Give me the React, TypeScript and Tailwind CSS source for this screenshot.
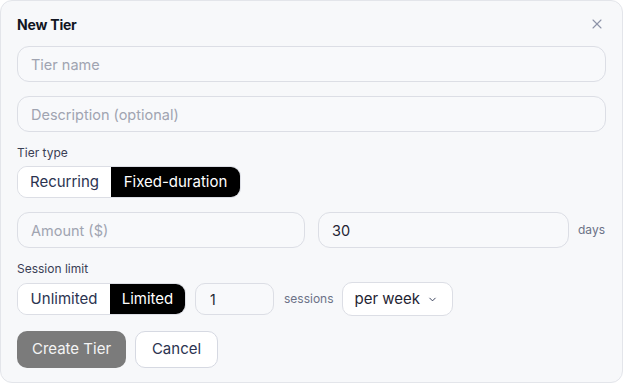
import { ChevronDown, X } from "lucide-react";

const inputClass =
  "h-9 rounded-xl border border-[#dcdee5] bg-[#f8f9fb] px-[13px] text-[14.5px] text-[#1f2433] placeholder:text-[#a0a4b1] outline-none";

const App = () => {
  return (
    <div className="w-[624px] h-[384px] bg-white" style={{ fontFamily: "Inter, 'Noto Sans', sans-serif" }}>
      <div className="w-[623px] h-[383px] rounded-[12px] border border-[#e3e5ea] bg-[#f7f8fa] px-4 pt-[13px] flex flex-col">
        {/* header */}
        <div className="flex items-center justify-between h-5">
          <h2 className="text-[14px] font-bold text-[#111522] tracking-[-0.2px]">New Tier</h2>
          <X className="w-4 h-4 mr-[1px] text-[#8d93a8]" strokeWidth={1.6} />
        </div>

        <input className={`${inputClass} mt-3 w-full`} placeholder="Tier name" />
        <input className={`${inputClass} mt-[14px] w-full`} placeholder="Description (optional)" />

        <label className="mt-[13px] h-4 text-[12px] leading-4 text-[#3a4055]">Tier type</label>
        <div className="mt-[5px] flex h-8 w-fit rounded-[10px] border border-[#dcdee5] overflow-hidden">
          <button className="w-[93px] bg-white text-[15px] text-[#2b3350]">Recurring</button>
          <button className="w-[129px] bg-black text-[15px] text-white">Fixed-duration</button>
        </div>

        <div className="mt-[14px] flex items-center">
          <input className={`${inputClass} w-[288px]`} placeholder="Amount ($)" />
          <input className={`${inputClass} ml-[13px] w-[251px]`} defaultValue="30" />
          <span className="ml-[9px] text-[12px] text-[#6c7287]">days</span>
        </div>

        <label className="mt-[13px] h-4 text-[12px] leading-4 text-[#3a4055]">Session limit</label>
        <div className="mt-[5px] flex items-center">
          <div className="flex h-8 w-fit rounded-[10px] border border-[#dcdee5] overflow-hidden">
            <button className="w-[92px] bg-white text-[15px] text-[#2b3350]">Unlimited</button>
            <button className="w-[75px] bg-black text-[15px] text-white">Limited</button>
          </div>
          <input
            className="ml-[9px] h-8 w-[79px] rounded-[10px] border border-[#dcdee5] bg-[#f8f9fb] px-[14px] text-[14px] text-[#1f2433] outline-none"
            defaultValue="1"
          />
          <span className="ml-[10px] text-[12px] text-[#6c7287]">sessions</span>
          <div className="relative ml-2">
            <select className="appearance-none h-[34px] w-[111px] rounded-[10px] border border-[#dcdee5] bg-white pl-3 text-[15px] text-[#1f2433] outline-none">
              <option>per week</option>
              <option>per month</option>
            </select>
            <ChevronDown className="absolute right-[15px] top-[12px] w-[11px] h-[11px] text-[#2b3350] pointer-events-none" strokeWidth={2} />
          </div>
        </div>

        <div className="mt-[15px] flex items-center gap-[9px]">
          <button className="h-[37px] w-[109px] rounded-[10px] bg-[#7b7b7b] text-[15px] text-[#f4f4f4]">Create Tier</button>
          <button className="h-[37px] w-[83px] rounded-[10px] border border-[#d6d9e2] bg-white text-[15px] text-[#2b3350]">Cancel</button>
        </div>
      </div>
    </div>
  );
};

export default App;
